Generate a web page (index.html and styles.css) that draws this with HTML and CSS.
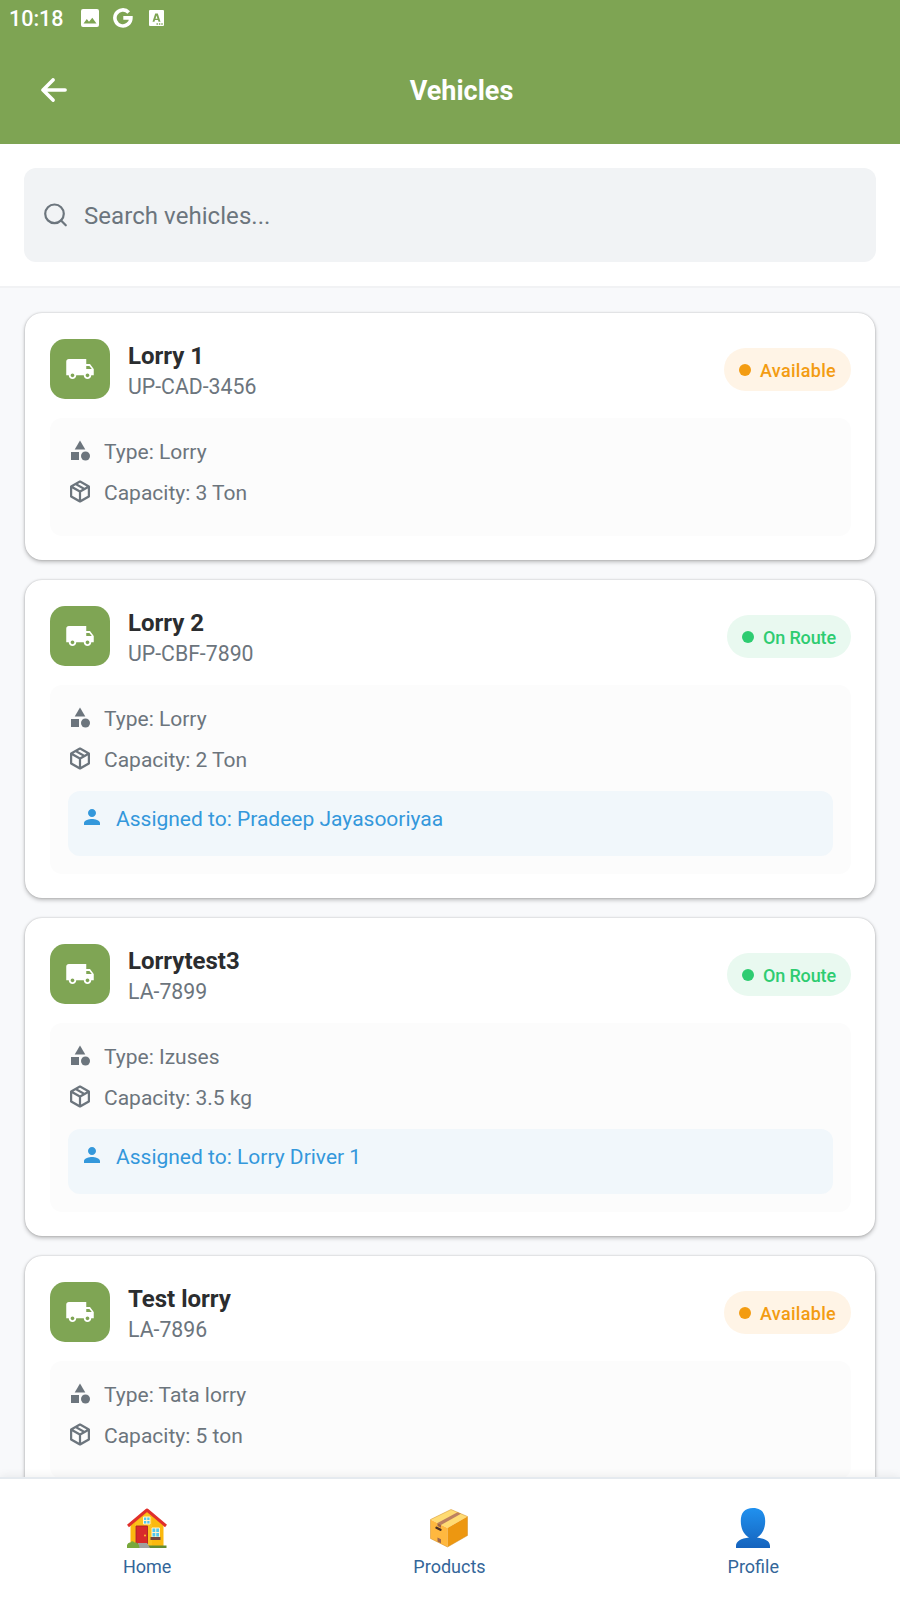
FILE: index.html
```html
<!DOCTYPE html>
<html lang="en">
<head>
<meta charset="utf-8">
<title>Vehicles</title>
<link rel="stylesheet" href="styles.css">
</head>
<body>
<svg class="defs" width="0" height="0" aria-hidden="true">
  <symbol id="truck" viewBox="0 0 24 24"><path fill="currentColor" d="M20 8h-3V4H3c-1.1 0-2 .9-2 2v11h2c0 1.66 1.34 3 3 3s3-1.34 3-3h6c0 1.66 1.34 3 3 3s3-1.34 3-3h2v-5l-3-4zM6 18.5c-.83 0-1.5-.67-1.5-1.5s.67-1.5 1.5-1.5 1.5.67 1.5 1.5-.67 1.5-1.5 1.5zm13.5-9l1.96 2.5H17V9.500h2.5zm-1.500 9c-.83 0-1.500-.67-1.500-1.500s.67-1.500 1.500-1.500 1.500.67 1.500 1.500-.67 1.500-1.500 1.500z"/></symbol>
  <symbol id="shapes" viewBox="0 0 24 24"><path fill="currentColor" d="M12 1.500l-5.300 9h10.600z"/><circle fill="currentColor" cx="17.500" cy="17" r="4.500"/><path fill="currentColor" d="M3 13h8v8H3z"/></symbol>
  <symbol id="box" viewBox="1.200 1.650 21.600 21.600"><path fill="currentColor" d="M21 16.5c0 .38-.21.71-.53.88l-7.900 4.440c-.16.12-.36.18-.57.18s-.41-.06-.57-.18l-7.900-4.440A1 1 0 0 1 3 16.500v-9c0-.38.21-.71.53-.88l7.900-4.440c.16-.12.36-.18.57-.18s.41.06.57.18l7.900 4.440c.32.17.53.5.53.88v9M12 4.150l-1.890 1.070L16 8.610l1.960-1.110L12 4.150M6.040 7.500L12 10.850l1.960-1.100-5.880-3.400L6.040 7.500M5 15.910l6 3.380v-6.710L5 9.210v6.700m14 0v-6.700l-6 3.370v6.710l6-3.380z"/></symbol>
  <symbol id="person" viewBox="0 0 24 24"><path fill="currentColor" d="M12 11c2.210 0 4-1.790 4-4s-1.790-4-4-4-4 1.790-4 4 1.790 4 4 4zm0 2c-2.670 0-8 1.340-8 4v2h16v-2c0-2.660-5.330-4-8-4z"/></symbol>
</svg>
<div class="app">
  <header class="header">
    <div class="status">
      <span class="clock">10:18</span>
      <svg class="s-img" viewBox="0 0 18 18"><path fill="#fff" fill-rule="evenodd" d="M2 0h14a2 2 0 0 1 2 2v14a2 2 0 0 1-2 2H2a2 2 0 0 1-2-2V2a2 2 0 0 1 2-2zM2.500 14.500h13l-4.200-5.800-3.300 4-2.200-2.600z"/></svg>
      <svg class="s-g" viewBox="0 0 20 20"><path fill="none" stroke="#fff" stroke-width="3.600" d="M15.700 4.400A8 8 0 1 0 17.900 9.900H10.300"/></svg>
      <svg class="s-a" viewBox="0 0 15 16"><path fill="#fff" fill-rule="evenodd" d="M1 0h13a1 1 0 0 1 1 1v14a1 1 0 0 1-1 1H1a1 1 0 0 1-1-1V1a1 1 0 0 1 1-1zM6.200 3.500L3.500 11.800h2l.5-1.700h3l.5 1.700h2L8.800 3.500zM7.500 5.500l1 3.200h-2z"/><path stroke="#7fa554" stroke-width="1.300" stroke-dasharray="1.400 1" d="M7.500 14h6.500"/></svg>
    </div>
    <div class="bar">
      <svg class="back" viewBox="0 0 26 24"><path fill="none" stroke="#fff" stroke-width="3.600" stroke-linecap="round" stroke-linejoin="round" d="M12 1.900L2 12l10 10.100M2.500 12H24.100"/></svg>
      <h1 class="title">Vehicles</h1>
    </div>
  </header>
  <div class="search-wrap">
    <div class="search">
      <svg class="mag" viewBox="0 0 24 24"><path fill="none" stroke="currentColor" stroke-width="2.200" stroke-linecap="round" d="M17 17.500L21.800 22.300"/><circle fill="none" stroke="currentColor" stroke-width="2.200" cx="10.500" cy="10.800" r="9.300"/></svg>
      <span class="placeholder">Search vehicles...</span>
    </div>
  </div>
  <main class="list">
    <article class="card">
      <div class="top"><div class="avatar"><svg><use href="#truck"/></svg></div><div class="who"><div class="name">Lorry 1</div><div class="plate">UP-CAD-3456</div></div><div class="pill available"><i class="dot"></i><span>Available</span></div></div>
      <div class="details">
        <div class="row"><svg><use href="#shapes"/></svg><span>Type: Lorry</span></div>
        <div class="row"><svg><use href="#box"/></svg><span>Capacity: 3 Ton</span></div>
      </div>
    </article>
    <article class="card">
      <div class="top"><div class="avatar"><svg><use href="#truck"/></svg></div><div class="who"><div class="name">Lorry 2</div><div class="plate">UP-CBF-7890</div></div><div class="pill route"><i class="dot"></i><span>On Route</span></div></div>
      <div class="details">
        <div class="row"><svg><use href="#shapes"/></svg><span>Type: Lorry</span></div>
        <div class="row"><svg><use href="#box"/></svg><span>Capacity: 2 Ton</span></div>
        <div class="assigned"><div class="row"><svg><use href="#person"/></svg><span>Assigned to: Pradeep Jayasooriyaa</span></div></div>
      </div>
    </article>
    <article class="card">
      <div class="top"><div class="avatar"><svg><use href="#truck"/></svg></div><div class="who"><div class="name">Lorrytest3</div><div class="plate">LA-7899</div></div><div class="pill route"><i class="dot"></i><span>On Route</span></div></div>
      <div class="details">
        <div class="row"><svg><use href="#shapes"/></svg><span>Type: Izuses</span></div>
        <div class="row"><svg><use href="#box"/></svg><span>Capacity: 3.5 kg</span></div>
        <div class="assigned"><div class="row"><svg><use href="#person"/></svg><span>Assigned to: Lorry Driver 1</span></div></div>
      </div>
    </article>
    <article class="card">
      <div class="top"><div class="avatar"><svg><use href="#truck"/></svg></div><div class="who"><div class="name">Test lorry</div><div class="plate">LA-7896</div></div><div class="pill available"><i class="dot"></i><span>Available</span></div></div>
      <div class="details">
        <div class="row"><svg><use href="#shapes"/></svg><span>Type: Tata lorry</span></div>
        <div class="row"><svg><use href="#box"/></svg><span>Capacity: 5 ton</span></div>
      </div>
    </article>
  </main>
  <nav class="nav">
    <div class="tab">
      <svg viewBox="0 0 40 40"><path fill="#fbb90e" d="M3.500 17L20 3l16.500 14v22h-33z"/><path fill="#fdc929" d="M8 15L20 5l5 4v29H8z" opacity=".5"/><path fill="none" stroke="#e02f2b" stroke-width="3" stroke-linejoin="round" d="M1 18L20 2l19 16"/><path fill="#d8292b" d="M9 18h11.500v18H9z"/><path fill="none" stroke="#a92227" stroke-width=".9" d="M9 36V18h11.500v18"/><circle cx="18" cy="27.500" r="1" fill="#ffc629"/><path fill="#50c8ef" stroke="#fff5cf" d="M16.500 9h6.500v7h-6.500zM25 20h7.500v9H25z"/><path stroke="#fff5cf" d="M19.750 9v7M16.500 12.500H23M28.750 20v9M25 24.500h7.500"/><path fill="#75463b" d="M23.500 29h10v3h-10z"/><path fill="#648c31" d="M18 37.500h21.500V40H18z"/><path fill="#a0a0a0" d="M11 35h9l3 5H11z"/><path fill="#78a83b" d="M0 40v-3q1-3 3.500-2.500Q5 32 7.500 34.500 12 34 12.500 40z"/></svg>
      <span>Home</span>
    </div>
    <div class="tab">
      <svg viewBox="0 0 40 40"><path fill="#ffdb73" d="M1.500 11.500L22 1.500 38.500 8.500 18.500 20z"/><path fill="#ffb83f" d="M1.500 11.500l17 8.500v19l-17-8.500z"/><path fill="#ed9710" d="M18.500 20l20-11.500v19L18.500 39z"/><path fill="#bd8060" d="M8.500 15L28.500 4.300l3.500 1.500L12 17z"/><path fill="#a0664b" d="M8.500 15l3.500 1.700v3l-3.500-1.800zM8.500 29.500l3.500 1.700v4l-3.500-1.700z"/><path stroke="#4c3023" stroke-width="2.400" stroke-linecap="round" d="M7.500 19.800l4 2"/><path fill="none" stroke="#d18a20" stroke-width=".5" d="M1.500 11.500L22 1.500 38.500 8.500v19L18.500 39l-17-8.500z"/></svg>
      <span>Products</span>
    </div>
    <div class="tab">
      <svg viewBox="0 0 40 40"><defs><linearGradient id="blue" gradientUnits="userSpaceOnUse" x1="0" y1="0" x2="0" y2="40"><stop offset="0" stop-color="#2091ef"/><stop offset="1" stop-color="#1563bd"/></linearGradient></defs><path fill="url(#blue)" d="M20 0C11.500 0 7.800 5 7.800 13c0 8 3.200 13.500 8.200 16.500C8 30.500 3 33 3 38v2h34v-2c0-5-5-7.500-13-8.500 5-3 8.200-8.500 8.200-16.500C32.200 5 28.500 0 20 0z"/></svg>
      <span>Profile</span>
    </div>
  </nav>
</div>
</body>
</html>
```
FILE: styles.css
```css
* { box-sizing: border-box; }
body { margin: 0; font-family: Roboto, "Liberation Sans", sans-serif; color: #6c757d; }
svg { display: block; flex: none; }
.defs { position: absolute; }
.app { height: 1600px; display: flex; flex-direction: column; overflow: hidden; background: #f8f9fb; }
.header { flex: none; height: 144px; background: #7ea453; color: #fff; }
.status { height: 36px; padding-left: 9px; display: flex; align-items: center; }
.clock { width: 72px; font-size: 21.5px; font-weight: 500; line-height: 36px; padding-top: 1px; }
.s-img { width: 18px; height: 18px; }
.s-g { width: 20px; height: 20px; margin-left: 14px; }
.s-a { width: 15px; height: 16px; margin-left: 16px; }
.bar { height: 108px; display: grid; grid-template-columns: 66px 1fr 43px; align-items: center; }
.back { width: 26px; height: 24px; margin-left: 41px; }
.title { margin: 0; padding-top: 2px; text-align: center; font-size: 27px; font-weight: 700; line-height: 36px; }
.search-wrap { flex: none; height: 144px; padding: 24px 24px 22px; background: #fff; border-bottom: 2px solid #f1f2f4; }
.search { height: 94px; border-radius: 12px; background: #f1f3f5; display: flex; align-items: center; gap: 16px; padding-left: 20px; }
.mag { width: 24px; height: 24px; }
.placeholder { font-size: 24px; letter-spacing: 0.06px; line-height: 30px; padding-top: 2px; }
.list { flex: 1; min-height: 0; overflow: hidden; padding: 25px 25px 0 25px; display: flex; flex-direction: column; gap: 20px; }
.card { flex: none; padding: 26px 24px 24px 25px; border-radius: 17px; background: #fff; box-shadow: 0 0 2px rgba(0,0,0,.22), 0 2px 4px rgba(0,0,0,.25); }
.top { height: 60px; display: flex; align-items: center; }
.avatar { width: 60px; height: 60px; border-radius: 15px; background: #7fa554; color: #fff; display: flex; align-items: center; justify-content: center; }
.avatar svg { width: 30px; height: 30px; }
.who { flex: 1; margin-left: 18px; padding-top: 3px; }
.name { font-size: 24px; font-weight: 700; line-height: 32px; color: #2b2d2f; }
.plate { font-size: 21.250px; line-height: 30px; }
.pill { height: 43px; border-radius: 22px; display: flex; align-items: center; gap: 9px; padding: 0 15px; font-size: 18px; font-weight: 500; }
.pill span { padding-top: 2px; }
.dot { width: 12px; height: 12px; margin-top: 1px; border-radius: 50%; background: currentColor; }
.available { color: #f39c12; background: #fff4e6; letter-spacing: 0.3px; }
.route { color: #2ecc71; background: #e9f9f0; letter-spacing: -0.12px; }
.details { margin-top: 19px; padding: 18px; border-radius: 12px; background: #fcfcfc; }
.row { height: 29px; margin-bottom: 12px; display: flex; align-items: center; gap: 12px; font-size: 21px; line-height: 29px; }
.row svg { width: 24px; height: 24px; }
.row span { padding-top: 4px; }
.assigned { margin-top: 18px; padding: 12px; border-radius: 12px; background: #f1f7fb; color: #3498db; height: 65px; }
.nav { flex: none; height: 123px; border-top: 2px solid #e5eaef; background: #fff; box-shadow: 0 -2px 8px rgba(0,0,0,.06); display: flex; justify-content: space-around; padding: 29px 0 0 2px; color: #336699; }
.tab { display: flex; flex-direction: column; align-items: center; }
.tab svg { width: 40px; height: 40px; }
.tab span { margin-top: 8px; font-size: 18px; line-height: 22px; }
```
